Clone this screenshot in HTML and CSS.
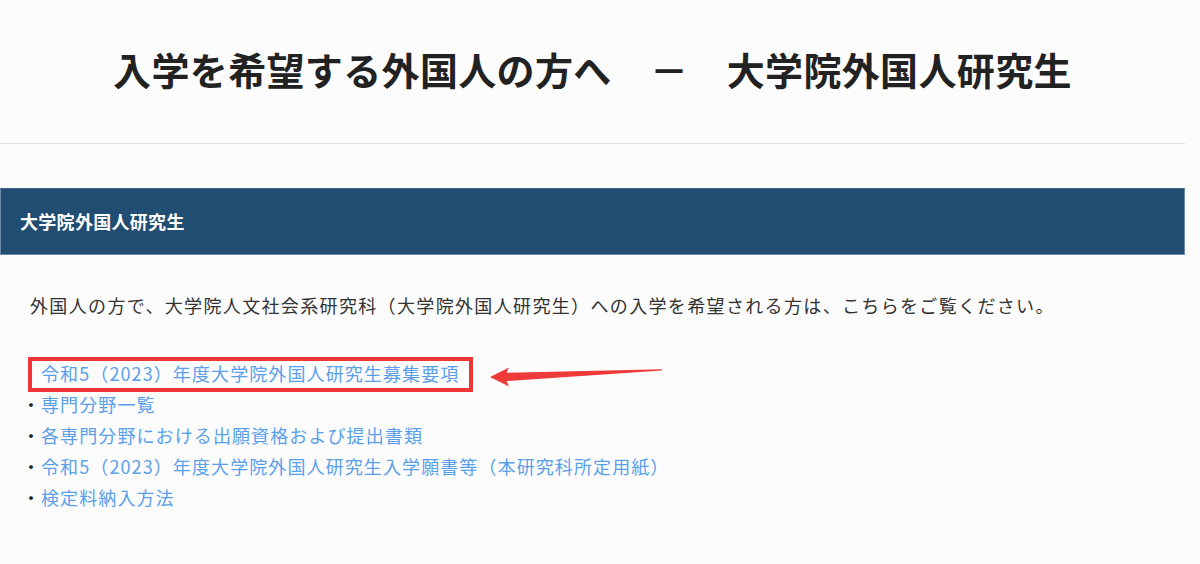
FILE: index.html
```html
<!DOCTYPE html>
<html lang="ja">
<head>
<meta charset="utf-8">
<title>大学院外国人研究生</title>
<link rel="stylesheet" href="styles.css">
</head>
<body>
<div class="page">
  <header class="page-head">
    <h1 class="title">入学を希望する外国人の方へ　－　大学院外国人研究生</h1>
  </header>
  <section class="section">
    <h2 class="section-bar">大学院外国人研究生</h2>
    <p class="lead">外国人の方で、大学院人文社会系研究科（大学院外国人研究生）への入学を希望される方は、こちらをご覧ください。</p>
    <ul class="links">
      <li class="item first">
        <span class="dot">・</span><a href="#">令和5（2023）年度大学院外国人研究生募集要項</a>
        <span class="highlight"></span>
        <svg class="arrow" width="180" height="26" viewBox="0 0 180 26">
          <polygon points="0,12 19,2.5 16.5,7.8 172,4.3 172,5.6 16.5,16 19,21.5" fill="#f03a3a"/>
        </svg>
      </li>
      <li class="item"><span class="dot">・</span><a href="#">専門分野一覧</a></li>
      <li class="item"><span class="dot">・</span><a href="#">各専門分野における出願資格および提出書類</a></li>
      <li class="item"><span class="dot">・</span><a href="#">令和5（2023）年度大学院外国人研究生入学願書等（本研究科所定用紙）</a></li>
      <li class="item"><span class="dot">・</span><a href="#">検定料納入方法</a></li>
    </ul>
  </section>
</div>
</body>
</html>
```

FILE: styles.css
```css
html, body {
  margin: 0;
  padding: 0;
  background: #fcfcfc;
}
body {
  font-family: "Noto Sans CJK JP", "Noto Sans", sans-serif;
  color: #333;
}
.page {
  width: 1185px;
}
.page-head {
  padding: 44px 0 50px;
  border-bottom: 1px solid #e4dedb;
}
.title {
  margin: 0;
  text-align: center;
  font-size: 38px;
  line-height: 49px;
  font-weight: 700;
  color: #222;
  letter-spacing: 0.35px;
}
.section {
  margin-top: 44px;
}
.section-bar {
  margin: 0;
  background: #224d72;
  border: 1px solid #6d89a5;
  border-top-color: #3d6283;
  color: #fff;
  font-size: 18px;
  font-weight: 700;
  line-height: 25px;
  padding: 20px 19px;
  letter-spacing: 0.3px;
}
.lead {
  margin: 35px 0 0;
  padding-left: 30px;
  font-size: 18px;
  line-height: 30px;
  letter-spacing: 1.35px;
  color: #333;
}
.links {
  list-style: none;
  margin: 38px 0 0;
  padding: 0 0 0 30px;
}
.item {
  position: relative;
  font-size: 18px;
  line-height: 31px;
  letter-spacing: 1.1px;
}
.dot {
  display: inline-block;
  width: 19px;
  margin-left: -8px;
  letter-spacing: 0;
  color: #222;
}
.first .dot {
  visibility: hidden;
}
.item a {
  color: #5a9fea;
  text-decoration: none;
}
.highlight {
  position: absolute;
  left: -2px;
  top: -1px;
  width: 437px;
  height: 27px;
  border: 4px solid #ef3535;
}
.arrow {
  position: absolute;
  left: 460px;
  top: 7px;
}
```
